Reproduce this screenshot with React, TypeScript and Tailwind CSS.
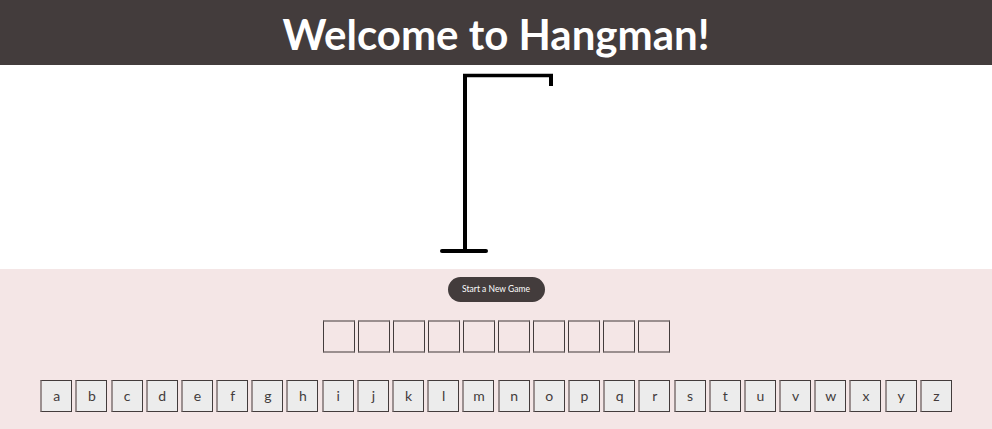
import React from "react";

const letters = "abcdefghijklmnopqrstuvwxyz".split("");

export default function App() {
  return (
    <div className="w-[992px] h-[429px] flex flex-col bg-white" style={{ fontFamily: "Lato, 'Open Sans', sans-serif" }}>
      <header className="h-[65px] bg-[#433c3c] flex items-center justify-center pt-[3px]">
        <h1 className="text-white font-bold text-[42px] leading-none">Welcome to Hangman!</h1>
      </header>
      <div className="h-[204px] bg-white">
        <svg width="992" height="204" viewBox="0 0 992 204">
          <g stroke="#000" strokeWidth="4" fill="none">
            <line x1="465" y1="9" x2="465" y2="187" strokeLinecap="butt" />
            <line x1="463" y1="10.5" x2="553" y2="10.5" strokeWidth="3.5" />
            <line x1="551" y1="9" x2="551" y2="21" />
            <line x1="442" y1="186" x2="486" y2="186" strokeLinecap="round" />
          </g>
        </svg>
      </div>
      <div className="flex-1 bg-[#f4e6e6] flex flex-col items-center">
        <button className="mt-[8px] w-[97px] h-[25px] rounded-full bg-[#433c3c] text-white text-[8.5px] leading-none flex items-center justify-center">
          Start a New Game
        </button>
        <div className="mt-[18px] flex gap-[3px]">
          {Array.from({ length: 10 }).map((_, i) => (
            <div
              key={i}
              className="w-[32px] h-[33px] border-x border-x-[#433c3c] border-y-2 border-y-[#9a8f8f]"
            />
          ))}
        </div>
        <div className="mt-[27px] flex gap-[3.2px]">
          {letters.map((l) => (
            <button
              key={l}
              className="w-[32px] h-[32px] bg-[#ececec] border border-[#433c3c] border-l-2 border-l-[#9a8f8f] text-[#433c3c] text-[14px] leading-none flex items-center justify-center"
            >
              {l}
            </button>
          ))}
        </div>
      </div>
    </div>
  );
}
